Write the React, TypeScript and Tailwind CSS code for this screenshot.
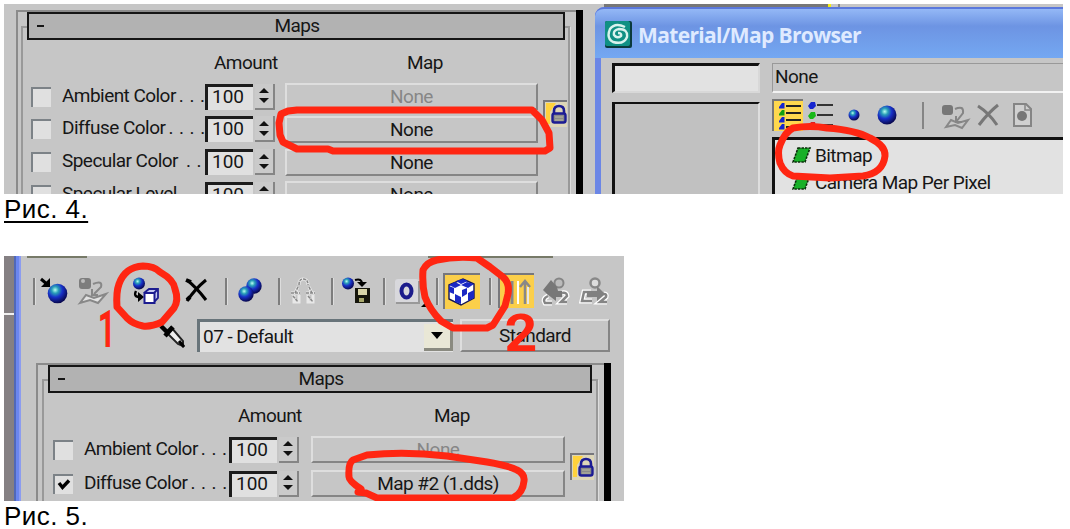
import type { ReactNode } from 'react';
import clsx from 'clsx';

type MapRow = {
  label: string;
  dots: number;
  map: string;
  checked?: boolean;
  disabled?: boolean;
};

const firstRows: MapRow[] = [
  { label: 'Ambient Color', dots: 3, map: 'None', disabled: true },
  { label: 'Diffuse Color', dots: 4, map: 'None' },
  { label: 'Specular Color', dots: 2, map: 'None' },
  { label: 'Specular Level', dots: 2, map: 'None' },
];

const secondRows: MapRow[] = [
  { label: 'Ambient Color', dots: 3, map: 'None', disabled: true },
  { label: 'Diffuse Color', dots: 4, map: 'Map #2 (1.dds)', checked: true },
];

function Spinner() {
  return (
    <div className="ml-[2px] flex h-[26px] w-5 shrink-0 flex-col items-center justify-center gap-[5px] border-r-2 border-b-2 border-[#858585] bg-[#cacaca]">
      <svg width="10" height="5" viewBox="0 0 10 5">
        <path d="M5 0 L10 5 H0Z" fill="#111" />
      </svg>
      <svg width="10" height="5" viewBox="0 0 10 5">
        <path d="M0 0 H10 L5 5Z" fill="#111" />
      </svg>
    </div>
  );
}

function LockButton({ className }: { className: string }) {
  return (
    <div className={clsx('absolute h-[27px] w-6 border-t-2 border-l-2 border-[#77777c] bg-[#ddd6b8]', className)}>
      <svg width="22" height="25" viewBox="0 0 22 25">
        <path d="M1 1 H11 L5 10 V22 H1Z" fill="#ffd23c" />
        <path d="M9 12 V9 Q9 4 14 4 Q19 4 19 9 V12" fill="none" stroke="#1c1c94" strokeWidth="2.6" />
        <rect x="7.5" y="11.5" width="13" height="9" rx="2" fill="#8a8a8a" stroke="#1c1c94" strokeWidth="2.4" />
        <path d="M10 15 H18 M10 18 H18" stroke="#b9b9a0" strokeWidth="1" />
      </svg>
    </div>
  );
}

function Row({ row, wide }: { row: MapRow; wide?: boolean }) {
  return (
    <div className="flex h-[27px] items-center whitespace-nowrap">
      <div className="flex h-5 w-5 shrink-0 items-center justify-center border-t-2 border-l-2 border-[#7c8287] bg-[#e0e0e0]">
        {row.checked && (
          <svg width="14" height="14" viewBox="0 0 14 14">
            <path d="M2 5 L5.5 9.5 L12 2.5" fill="none" stroke="#000" strokeWidth="3.4" />
          </svg>
        )}
      </div>
      <div className={clsx('-mt-[2px] ml-[11px] flex shrink-0 justify-between pr-[1px]', wide ? 'w-[145px]' : 'w-[143px]')}>
        <span>{row.label}</span>
        <span className="flex">
          {Array.from({ length: row.dots }, (_, i) => (
            <span key={i} className="w-[10.6px] text-center">.</span>
          ))}
        </span>
      </div>
      <div className="h-[26px] w-12 shrink-0 border-t-[3px] border-l-[3px] border-[#1c1c1c] bg-[#e0e0e0] pl-[4px] leading-[20px] tracking-normal">
        100
      </div>
      <Spinner />
      <div
        className={clsx(
          'h-[27px] shrink-0 border-2 border-t-[#dedede] border-r-[#858585] border-b-[#858585] border-l-[#dedede] text-center leading-[23px]',
          wide ? 'ml-[12px] w-[254px]' : 'ml-[10px] w-[253px]',
          row.disabled && 'text-[#868686]',
        )}
      >
        {row.map}
      </div>
    </div>
  );
}

type PanelProps = { rows: MapRow[]; className: string; rowGap: string; lock: string; wide?: boolean };

function MapsPanel({ rows, className, rowGap, lock, wide }: PanelProps) {
  return (
    <div className={clsx('flex shrink-0', className)}>
      <div className={clsx('relative border-t-2 border-l-2 border-[#8b8b8b]', wide ? 'w-[568px]' : 'w-[560px]')}>
        <div
          className={clsx(
            'relative z-10 flex h-[28px] items-center border-2 border-[#151515] bg-[#b2b2b2] pl-2',
            wide ? 'ml-[10px] w-[544px]' : 'ml-[9px] w-[538px]',
          )}
        >
          <span className="h-[2px] w-[7px] bg-[#151515]" />
          <span className="flex-1 pr-[13px] text-center">Maps</span>
        </div>
        <div
          className={clsx(
            '-mt-[14px] h-[300px] border-2 border-[#999] pt-[24px] shadow-[1px_1px_0_#ddd]',
            wide ? 'ml-[4px] w-[556px] pl-[9px]' : 'ml-[3px] w-[549px] pl-[8px]',
          )}
        >
          <div className="flex h-[22px] items-center">
            <span className={clsx('w-[62px]', wide ? 'ml-[185px]' : 'ml-[183px]')}>Amount</span>
            <span className={wide ? 'ml-[134px]' : 'ml-[131px]'}>Map</span>
          </div>
          <div className={clsx('mt-[9px] flex flex-col', rowGap)}>
            {rows.map((row) => (
              <Row key={row.label} row={row} wide={wide} />
            ))}
          </div>
        </div>
        <LockButton className={lock} />
      </div>
      <div className="w-[7px] bg-black" />
    </div>
  );
}

function BrowserToolbar() {
  return (
    <svg className="shrink-0" width="291" height="36" viewBox="772 98 291 36">
      <rect x="772" y="98" width="31" height="32" fill="#ffd84e" />
      <path d="M773 130 V99 H803" fill="none" stroke="#777" strokeWidth="2" />
      {[105, 112, 119, 126].map((y, i) => (
        <g key={y}>
          <path d={`M779 ${y + 1} L782 ${y - 3} H784.5 V${y + 2.5} H779Z`} fill={i === 1 ? '#12a012' : '#1524cf'} />
          <path d={`M786 ${y} H801`} stroke="#222" strokeWidth="2" />
        </g>
      ))}
      {[104, 114, 124].map((y, i) => (
        <g key={y}>
          <path d={`M808 ${y + 1} L811 ${y - 3} H815 L816 ${y + 1} L813 ${y + 4} H810Z`} fill={['#1524cf', '#18b818', '#e02020'][i]} />
          <path d={`M817 ${y} H833`} stroke="#333" strokeWidth="2" />
        </g>
      ))}
      <circle cx="854" cy="114" r="5.5" fill="url(#ball)" />
      <circle cx="887" cy="114" r="9.5" fill="url(#ball)" />
      <path d="M923 101 V128" stroke="#858585" strokeWidth="2" />
      <path d="M946 126 L951 119 L958 122 L968 119 L962 127 L955 124Z" fill="none" stroke="#888" strokeWidth="2" />
      <rect x="942" y="104" width="11" height="10" rx="3" fill="#777" />
      <path d="M955 108 Q964 104 963 112 L956 121 M956 115 V121 H962" fill="none" stroke="#858585" strokeWidth="2" />
      <path d="M978 105 Q989 112 997 124 M998 104 Q988 112 979 124" fill="none" stroke="#777" strokeWidth="3" />
      <path d="M1014 103 H1026 L1031 108 V125 H1014Z" fill="#d0d0d0" stroke="#858585" strokeWidth="2" />
      <path d="M1025 103 V109 H1031" fill="none" stroke="#858585" strokeWidth="1.5" />
      <circle cx="1022" cy="115" r="5" fill="#777" />
    </svg>
  );
}

function MapItem({ name }: { name: string }) {
  return (
    <div className="flex h-[27px] items-center pl-[17px]">
      <svg width="20" height="17" viewBox="0 0 20 17">
        <path d="M6 1 H18 L13 15 H1Z" fill="#18b028" stroke="#0b2d0b" strokeWidth="1.6" strokeDasharray="2.5 1" />
      </svg>
      <span className="ml-[3px]">{name}</span>
    </div>
  );
}

function BrowserWindow() {
  return (
    <div className="ml-3 flex w-[468px] shrink-0 flex-col">
      <div className="ml-[9px] flex h-[3px] shrink-0">
        <div className="w-[224px] bg-[#777]" />
        <div className="w-[3px] bg-[#f5ee10]" />
        <div className="ml-[7px] w-[2px] bg-[#888]" />
      </div>
      <div className="flex flex-1 flex-col rounded-tl-[9px] border-l-[6px] border-[#6b86e6] bg-[#c6c6c6]">
        <div className="-ml-[6px] flex h-[51px] shrink-0 items-center rounded-tl-[9px] border-t-2 border-[#5a78dc] bg-linear-to-b from-[#94b8f6] via-[#6d94e3] via-35% to-[#74a8f2] pl-[10px]">
          <svg className="mt-[2px]" width="27" height="27" viewBox="0 0 27 27">
            <rect width="27" height="27" rx="2" fill="#0b3a3c" />
            <rect width="25" height="25" rx="2" fill="#109084" />
            <path d="M20 6 Q10 1 5 8 Q1 17 8 21 Q19 24 22 16 Q23 8 14 8 Q8 9 9 14 Q12 18 16 15 Q17 12 13 12" fill="none" stroke="#d9f3ee" strokeWidth="2.4" />
          </svg>
          <span className="mt-[3px] ml-[6px] font-['Open_Sans'] text-[21px] font-bold tracking-[-0.65px] text-[#dfeaff]">
            Material/Map Browser
          </span>
        </div>
        <div className="flex pt-[5px] pl-[11px]">
          <div className="flex w-[148px] shrink-0 flex-col">
            <div className="h-[30px] border-t-[3px] border-r-2 border-b-2 border-l-[3px] border-t-[#111] border-r-[#d8d8d8] border-b-[#d8d8d8] border-l-[#111] bg-[#e2e2e2]" />
            <div className="mt-[9px] h-[100px] border-t-2 border-r-2 border-l-[3px] border-t-[#111] border-r-[#dedede] border-l-[#111] bg-[#c1c1c1]" />
          </div>
          <div className="ml-3 flex w-[291px] flex-col">
            <div className="h-[30px] border-t border-b-2 border-l border-t-[#999] border-b-[#f2f2f2] border-l-[#999] pl-[2px] leading-[25px]">
              None
            </div>
            <div className="mt-[6px] flex">
              <BrowserToolbar />
            </div>
            <div className="mt-[2px] h-[70px] border-t-[3px] border-l-[3px] border-[#111] bg-[#e2e2e2] pt-[2px]">
              <MapItem name="Bitmap" />
              <MapItem name="Camera Map Per Pixel" />
            </div>
          </div>
        </div>
      </div>
    </div>
  );
}

// One toolbar cell; x is the cell's left edge on the toolbar's own scale.
function Tool({ x, w, children }: { x: number; w: number; children: ReactNode }) {
  return (
    <svg className="shrink-0" width={w} height="38" viewBox={`${x} 273 ${w} 38`}>
      {children}
    </svg>
  );
}

function Divider({ x }: { x: number }) {
  return (
    <>
      <path d={`M${x} 278 V305`} stroke="#7d7d7d" strokeWidth="2" />
      <path d={`M${x + 1.5} 278 V305`} stroke="#ddd" strokeWidth="1" />
    </>
  );
}

function MaterialToolbar() {
  return (
    <div className="flex pl-[9px]">
      <Tool x={30} w={42}>
        <Divider x={34} />
        <circle cx="57.5" cy="293.5" r="9.8" fill="url(#ball)" />
        <path d="M41 279 L48 285" stroke="#000" strokeWidth="3" />
        <path d="M50 278 V287 H41Z" fill="#000" />
      </Tool>
      <Tool x={72} w={42}>
        <rect x="79" y="278" width="12" height="11" rx="3" fill="#7d7d7d" />
        <circle cx="83" cy="281" r="2" fill="#bbb" />
        <path d="M80 303 L86 295 L94 298 L106 294 L98 303 L90 300Z" fill="#e2e2e2" stroke="#888" strokeWidth="2" />
        <path d="M93 284 Q103 280 101 287 L94 294 M92 289 V295 H98" fill="none" stroke="#888" strokeWidth="2" />
      </Tool>
      <Tool x={114} w={62}>
        <circle cx="139" cy="283.5" r="6" fill="url(#ball)" />
        <path d="M136 291 Q133 297 140 297" fill="none" stroke="#000" strokeWidth="2.4" />
        <path d="M138 292 L144 297 L138 302Z" fill="#000" />
        <path d="M144 293 L149 289 H158 V298 L154 302 M154 293 L158 289" fill="#c3c8f0" stroke="#1c1c90" strokeWidth="1.8" />
        <rect x="144.5" y="293" width="10" height="10" fill="#fff" stroke="#1c1c90" strokeWidth="2" />
      </Tool>
      <Tool x={176} w={44}>
        <path d="M187 280 Q197 288 206 300 M206 280 Q195 289 187 301" fill="none" stroke="#000" strokeWidth="3" />
        <path d="M186 280 L191 282 M187 300 L190 297" stroke="#000" strokeWidth="4" />
      </Tool>
      <Tool x={220} w={52}>
        <Divider x={226} />
        <circle cx="254" cy="286" r="7.7" fill="url(#ball)" />
        <circle cx="246" cy="294" r="7.7" fill="url(#ball)" />
      </Tool>
      <Tool x={272} w={53}>
        <Divider x={279} />
        <path d="M299 285 Q299 279 303 279 Q308 279 308 285 M298 287 L295 293 M309 287 L312 293 M291 293 H300 M306 293 H315 M294 295 V302 H299 V295 M308 295 V302 H313 V295" fill="none" stroke="#e8e8e8" strokeWidth="3" />
        <path d="M299 285 Q299 279 303 279 Q308 279 308 285 M298 287 L295 293 M309 287 L312 293 M291 293 H300 M306 293 H315 M293 296 L298 302 M308 296 L313 302" fill="none" stroke="#888" strokeWidth="1.5" strokeDasharray="3 1" />
      </Tool>
      <Tool x={325} w={54}>
        <Divider x={332} />
        <circle cx="348" cy="283.5" r="6" fill="url(#ball)" />
        <path d="M355 280 Q362 278 362 284" fill="none" stroke="#000" strokeWidth="2.2" />
        <path d="M357 282 H367 L362 287Z" fill="#000" />
        <rect x="355" y="288" width="15" height="15" fill="#16160c" />
        <rect x="358" y="289" width="9" height="6" fill="#d9d5a8" />
        <rect x="359" y="298" width="5" height="4" fill="#a8a86c" />
      </Tool>
      <Tool x={379} w={52}>
        <Divider x={384} />
        <rect x="395" y="279" width="24" height="24" rx="3" fill="#d8d8dc" />
        <path d="M396 303 H419 V281" fill="none" stroke="#999" strokeWidth="2" />
        <ellipse cx="406.5" cy="291" rx="5" ry="6.5" fill="none" stroke="#1c1c8c" strokeWidth="4" />
        <path d="M427 301 V307 H421Z" fill="#000" />
      </Tool>
      <Tool x={431} w={54}>
        <Divider x={437} />
        <rect x="443" y="273" width="37" height="36" fill="#fbcf4a" />
        <path d="M444 309 V274 H480" fill="none" stroke="#77777c" strokeWidth="2" />
        <path d="M449 285 L463 279 L474 284 V298 L461 305 L449 299Z" fill="#fff" stroke="#151550" strokeWidth="1.4" />
        <path d="M449 285 L455 282 L461 285 L455 288Z M461 285 L467 282 L474 284 L468 288Z M456 281 L463 279 L468 281 L461 284Z M449 286 L454 288 V294 L449 292Z M455 294 L461 297 V304 L455 302Z M462 290 L467 288 V294 L462 297Z M468 293 L474 290 V298 L468 301Z" fill="#1b28c4" />
      </Tool>
      <Tool x={485} w={52}>
        <Divider x={490} />
        <rect x="498" y="273" width="36" height="35" fill="#fbcf4a" />
        <path d="M499 308 V274 H534" fill="none" stroke="#77777c" strokeWidth="2" />
        <path d="M512 281 V304" stroke="#888" strokeWidth="3" />
        <path d="M518 281 V304" stroke="#fff" strokeWidth="2" />
        <path d="M525 304 V283 M520 287 L525 281 L530 287" fill="none" stroke="#888" strokeWidth="2.5" />
        <path d="M528 287 V304" stroke="#e8e8e8" strokeWidth="2" />
      </Tool>
      <Tool x={537} w={38}>
        <circle cx="559" cy="283" r="4.5" fill="#bbb" stroke="#858585" strokeWidth="2" />
        <path d="M548 296 Q542 299 545 303 H552 M562 293 Q567 292 567 296 L561 302 H567" fill="none" stroke="#fff" strokeWidth="5" />
        <path d="M548 296 Q542 299 545 303 H552 M562 293 Q567 292 567 296 L561 302 H567" fill="none" stroke="#858585" strokeWidth="2.5" />
        <path d="M543 290 L551 280 L557 287 L558 291 H562 V297 H556 V301 L547 294Z" fill="#777" />
      </Tool>
      <Tool x={575} w={40}>
        <circle cx="595" cy="283" r="4.5" fill="#ddd" stroke="#888" strokeWidth="2.5" />
        <path d="M591 292 H584 L582 301 H592 M604 294 Q607 294 606 297 L600 302 H607" fill="none" stroke="#fff" strokeWidth="5" />
        <path d="M591 292 H584 L582 301 H592 M604 294 Q607 294 606 297 L600 302 H607" fill="none" stroke="#858585" strokeWidth="2.5" />
        <path d="M587 291 H597 V286 L605 294 L597 301 V297 H587Z" fill="#808080" />
      </Tool>
    </div>
  );
}

function MaterialName() {
  return (
    <div className="mt-[8px] flex h-[33px] items-center pl-[137px]">
      <svg width="27" height="27" viewBox="159 324 27 27">
        <path d="M167 334 L172 329 L184 343 V348 L179 346Z" fill="#eee" stroke="#222" strokeWidth="2" />
        <path d="M162 328 L170 336 M166 338 L174 329" stroke="#000" strokeWidth="4.5" />
        <path d="M180 343 L185 349" stroke="#000" strokeWidth="3" />
      </svg>
      <div className="ml-[12px] flex h-[33px] w-[256px] items-center justify-between border-t-[3px] border-l-[3px] border-[#68747a] bg-[#e2e2e2] pl-[3px]">
        <span>07 - Default</span>
        <div className="flex h-[27px] w-[29px] items-center justify-center border-r-[3px] border-b-[3px] border-[#8a8a80] bg-[#e9e7d6]">
          <svg width="12" height="7" viewBox="0 0 12 7">
            <path d="M0 0 H12 L6 7Z" fill="#000" />
          </svg>
        </div>
      </div>
      <div className="ml-[7px] h-[33px] w-[150px] border-2 border-t-[#dedede] border-r-[#858585] border-b-[#858585] border-l-[#dedede] text-center leading-[29px]">
        Standard
      </div>
    </div>
  );
}

export default function App() {
  return (
    <div className="h-[529px] w-[1070px] overflow-hidden bg-white pt-1 pl-1 font-['Roboto'] text-[19px] leading-[22px] tracking-[-0.55px] text-[#161616]">
      <div className="relative flex h-[190px] w-[1059px] overflow-hidden bg-[#c6c6c6]">
        <MapsPanel rows={firstRows} className="mt-[6px] ml-3" rowGap="gap-[5.8px]" lock="top-[88px] left-[525px]" />
        <BrowserWindow />
        <svg className="absolute inset-0 z-20" width="1059" height="190" viewBox="4 4 1059 190">
          <defs>
            <radialGradient id="ball" cx=".38" cy=".32" r=".68">
              <stop offset="0" stopColor="#b8fff0" />
              <stop offset=".25" stopColor="#2aa0b8" />
              <stop offset=".55" stopColor="#1830c8" />
              <stop offset="1" stopColor="#080850" />
            </radialGradient>
          </defs>
          <g fill="none" stroke="#ff2612" strokeWidth="7" strokeLinejoin="round" strokeLinecap="round">
            <path d="M297 110 H532 L542 120 L549 133 L550 148 L545 151 H333 L328 149 H297 L283 142 L280 135 L279 123 L281 114 L288 111Z" />
            <path d="M793 128 Q810 125 827 128 Q855 130 870 138 Q886 146 885 156 Q883 173 863 176 L830 178 L793 176 Q784 173 780 163 Q777 152 780 145 Q785 132 793 128Z" />
          </g>
        </svg>
      </div>
      <p className="h-[62px] font-['Liberation_Sans'] text-[26px] leading-[31px] tracking-[0.45px] text-black underline decoration-2 underline-offset-[3px]">
        Рис. 4.
      </p>
      <div className="relative flex h-[245px] w-[620px] overflow-hidden bg-[#c6c6c6]">
        <div className="w-[10px] shrink-0 bg-[#858083]" />
        <div className="w-[7px] shrink-0 border-x-2 border-l-[#5068b8] border-r-[#8c9cf0] bg-[#6b86ee]" />
        <div className="flex flex-col">
          <div className="flex h-[17px] shrink-0 items-start">
            <div className="ml-[6px] h-[2px] w-[60px] bg-[#777a68]" />
            <div className="ml-[341px] h-[2px] w-[125px] bg-[#777a68]" />
          </div>
          <MaterialToolbar />
          <MaterialName />
          <MapsPanel rows={secondRows} className="mt-[11px] ml-[15px]" rowGap="gap-[7px]" lock="top-[88px] left-[532px]" wide />
        </div>
        <svg className="absolute inset-0 z-20" width="620" height="245" viewBox="4 256 620 245">
          <path d="M4 314 H14" stroke="#f0f0f0" strokeWidth="2" />
          <g fill="none" stroke="#ff2612" strokeWidth="7" strokeLinejoin="round" strokeLinecap="round">
            <path d="M117 307 Q116 292 119 284 Q125 267 143 266 Q154 266 160 272 Q174 280 175 289 Q179 300 174 308 L162 322 Q151 327 143 326 Q133 324 127 318Z" />
            <path d="M423 270 Q427 262 437 260 Q455 256 477 258 L490 267 L503 277 Q510 283 508 294 L505 306 L493 325 L487 328 H453 L441 321 Q430 310 425 297 Q422 285 423 270Z" />
            <path d="M367 455 Q405 451 447 456 L487 462 Q510 466 517 470 Q525 474 524 481 Q523 493 513 498 H377 L366 493 L358 492 L361 489 Q349 481 349 477 Q348 463 353 460Z" />
          </g>
        </svg>
        <span className="absolute top-[55px] left-[88px] z-20 scale-x-[0.6] text-[52px] leading-[38px] font-bold text-[#ff2612]">1</span>
        <span className="absolute top-[59px] left-[502px] z-20 scale-x-110 text-[52px] leading-[38px] font-bold text-[#ff2612]">2</span>
      </div>
      <p className="font-['Liberation_Sans'] text-[26px] leading-[31px] tracking-[0.45px] text-black">Рис. 5.</p>
    </div>
  );
}
